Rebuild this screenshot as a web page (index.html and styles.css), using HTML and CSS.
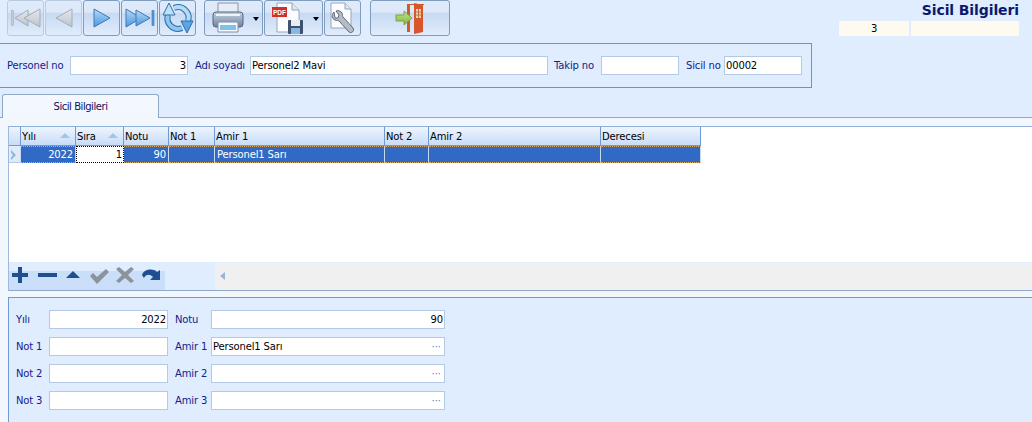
FILE: index.html
```html
<!DOCTYPE html>
<html lang="tr">
<head>
<meta charset="utf-8">
<title>Sicil Bilgileri</title>
<link rel="stylesheet" href="styles.css">
</head>
<body>
<svg class="defs" width="0" height="0">
  <defs>
    <linearGradient id="blueArrow" x1="0" y1="0" x2="0" y2="1"><stop offset="0" stop-color="#b6d9f7"/><stop offset="1" stop-color="#4a98e0"/></linearGradient>
    <linearGradient id="greyArrow" x1="0" y1="0" x2="0" y2="1"><stop offset="0" stop-color="#e4e8ec"/><stop offset="1" stop-color="#bcc4cc"/></linearGradient>
    <linearGradient id="printBody" x1="0" y1="0" x2="0" y2="1"><stop offset="0" stop-color="#c4d0e0"/><stop offset="1" stop-color="#6f84a0"/></linearGradient>
    <linearGradient id="greenArrow" x1="0" y1="0" x2="0" y2="1"><stop offset="0" stop-color="#c6e58a"/><stop offset="1" stop-color="#7db53c"/></linearGradient>
  </defs>
</svg>
<header class="top">
  <div class="toolbar">
    <div class="group">
      <button class="btn off" aria-label="İlk"><svg width="30" height="20" viewBox="0 0 30 20"><rect x="0.500" y="2.500" width="2" height="15" fill="#c4cbd2" stroke="#a9b1b9" stroke-width=".6"/><path d="M4 10 17 2v16z" fill="url(#greyArrow)" stroke="#a4acb4"/><path d="M13 10 29 1v18z" fill="url(#greyArrow)" stroke="#a4acb4"/></svg></button>
      <button class="btn off" aria-label="Önceki"><svg width="20" height="24" viewBox="0 0 20 24"><path d="M2 12 18 3v18z" fill="url(#greyArrow)" stroke="#a4acb4"/></svg></button>
      <button class="btn" aria-label="Sonraki"><svg width="20" height="24" viewBox="0 0 20 24"><path d="M18 12 2 3v18z" fill="url(#blueArrow)" stroke="#3c78b8"/></svg></button>
      <button class="btn" aria-label="Son"><svg width="30" height="20" viewBox="0 0 30 20"><path d="M16 10 1 1v18z" fill="url(#blueArrow)" stroke="#3c78b8"/><path d="M25 10 11 2v16z" fill="url(#blueArrow)" stroke="#3c78b8"/><rect x="27" y="2.500" width="2" height="15" fill="#4f9be0" stroke="#3c78b8" stroke-width=".6"/></svg></button>
      <button class="btn" aria-label="Yenile"><svg width="32" height="32" viewBox="0 0 32 32">
        <g fill="none">
          <path d="M20 26A10.500 10.500 0 0 1 6 13" stroke="#2f6ca8" stroke-width="6"/>
          <path d="M12 6A10.500 10.500 0 0 1 26 19" stroke="#2f6ca8" stroke-width="6"/>
          <path d="M20 26A10.500 10.500 0 0 1 6 13" stroke="#8ec7f0" stroke-width="4"/>
          <path d="M12 6A10.500 10.500 0 0 1 26 19" stroke="#b4dbf7" stroke-width="4"/>
        </g>
        <path d="M7 1 1 13h12z" fill="#bfe0f8" stroke="#2f6ca8"/>
        <path d="M25 31l6-12H19z" fill="#5aa5e6" stroke="#2f6ca8"/>
      </svg></button>
    </div>
    <div class="group">
      <button class="btn wide" aria-label="Yazdır"><svg width="32" height="32" viewBox="0 0 32 32"><path d="M6 1h20v11H6z" fill="#e8edf3" stroke="#8794a6"/><rect x="1" y="10" width="30" height="15" rx="3" fill="url(#printBody)" stroke="#4f6480"/><rect x="4" y="12" width="24" height="2" fill="#eef2f7"/><path d="M6 20h20v10H6z" fill="#f6f9fc" stroke="#7f8da0"/><rect x="8" y="23" width="16" height="5" fill="#7fc0ec"/></svg><i class="caret"></i></button>
      <button class="btn wide" aria-label="PDF"><svg width="34" height="32" viewBox="0 0 34 32"><path d="M5 1h15l7 7v22H5z" fill="#fafcff" stroke="#97a6b8"/><path d="M20 1v7h7" fill="#dfe7f0" stroke="#97a6b8"/><rect x="0" y="5" width="15" height="10" fill="#d0302a"/><text x="1" y="13" class="pdf">PDF</text><rect x="16" y="18" width="15" height="14" rx="1" fill="#3d5170"/><rect x="19" y="18" width="9" height="6" fill="#e8edf3"/><rect x="19" y="26" width="9" height="6" fill="#88b8e0"/></svg><i class="caret"></i></button>
      <button class="btn" aria-label="Ayarlar"><svg width="26" height="32" viewBox="0 0 26 32"><path d="M1 1h14l6 6v19H1z" fill="#fafcff" stroke="#97a6b8"/><path d="M15 1v6h6" fill="#dfe7f0" stroke="#97a6b8"/><path d="M4 10c-3 3-2 7 1 8 2 1 3 0 4 1l10 11c2 2 6-1 4-4L13 15c-1-1 0-2-1-4-1-2-4-3-6-2l3 4-1 3-3 0z" fill="#b4bcc6" stroke="#5f6b7a"/></svg></button>
    </div>
    <button class="btn exit" aria-label="Çıkış"><svg width="30" height="32" viewBox="0 0 30 32"><path d="M12 2h17v1H15v27h-3z" fill="#cf5a2c"/><path d="M19 1l9 2v27l-9 2z" fill="#d8562a"/><rect x="21" y="7" width="5" height="9" fill="#f0d6a6"/><path d="M21 10h5M21 13h5M23.500 7v9" stroke="#a9512b" fill="none" stroke-width=".7"/><path d="M1 13h8V9l8 7-8 7v-4H1z" fill="url(#greenArrow)" stroke="#7da24a"/></svg></button>
  </div>
  <div class="title-block">
    <h1 class="title">Sicil Bilgileri</h1>
    <div class="badges"><span class="badge num">3</span><span class="badge text"></span></div>
  </div>
</header>

<section class="person">
  <label class="lbl l-pno">Personel no</label><div class="input r w-pno">3</div>
  <label class="lbl l-ad">Adı soyadı</label><div class="input w-ad">Personel2 Mavi</div>
  <label class="lbl l-tk">Takip no</label><div class="input w-tk"></div>
  <label class="lbl l-sc">Sicil no</label><div class="input w-sc">00002</div>
</section>

<nav class="tabs"><div class="tab">Sicil Bilgileri</div></nav>

<main class="page">
  <div class="gridwrap">
    <div class="grid">
      <div class="row head">
        <div class="cell c0"></div>
        <div class="cell c1">Yılı<i class="sort"></i></div>
        <div class="cell c2">Sıra<i class="sort"></i></div>
        <div class="cell c3">Notu</div>
        <div class="cell c4">Not 1</div>
        <div class="cell c5">Amir 1</div>
        <div class="cell c6">Not 2</div>
        <div class="cell c7">Amir 2</div>
        <div class="cell c8">Derecesi</div>
      </div>
      <div class="row sel">
        <div class="cell c0"><svg width="8" height="10" viewBox="0 0 8 10"><path d="M1 0l5 5-5 5 0-2.500L3 5 1 2.500z" fill="#8fb3dd"/></svg></div>
        <div class="cell c1 r">2022</div>
        <div class="cell c2 r focus">1</div>
        <div class="cell c3 r">90</div>
        <div class="cell c4"></div>
        <div class="cell c5">Personel1 Sarı</div>
        <div class="cell c6"></div>
        <div class="cell c7"></div>
        <div class="cell c8"></div>
      </div>
    </div>
    <div class="gridbar">
      <div class="navicons">
        <svg width="154" height="22" viewBox="0 0 154 22">
          <path d="M7 1h4v6h6v4h-6v6H7v-6H1V7h6z" fill="#1f4f8e"/>
          <rect x="27" y="7" width="19" height="4" fill="#1f4f8e"/>
          <path d="M55 12 62 5l7 7z" fill="#1f4f8e"/>
          <path d="M79 10l3-3 4 4 9-8 3 3-12 12z" fill="#8c939b"/>
          <path d="M105 3l3-2 6 5 6-5 3 2-6 6 6 6-3 2-6-5-6 5-3-2 6-6z" fill="#8c939b"/>
          <path d="M131 9c2-6 11-7 15-3l3-2v10h-10l3-3c-3-3-7-3-9 1z" fill="#1f4f8e"/>
        </svg>
      </div>
      <div class="spacer"></div>
      <div class="scroll"><i class="left"></i></div>
    </div>
  </div>

  <section class="detail">
    <div class="drow"><label class="lbl d1">Yılı</label><div class="input r df">2022</div><label class="lbl d2">Notu</label><div class="input r dl">90</div></div>
    <div class="drow"><label class="lbl d1">Not 1</label><div class="input df"></div><label class="lbl d2">Amir 1</label><div class="input dl more">Personel1 Sarı</div></div>
    <div class="drow"><label class="lbl d1">Not 2</label><div class="input df"></div><label class="lbl d2">Amir 2</label><div class="input dl more"></div></div>
    <div class="drow"><label class="lbl d1">Not 3</label><div class="input df"></div><label class="lbl d2">Amir 3</label><div class="input dl more"></div></div>
  </section>
</main>
</body>
</html>
```
FILE: styles.css
```css
* { box-sizing: border-box; }
html, body { margin: 0; height: 100%; }
body {
  width: 1032px; height: 422px; overflow: hidden;
  background: #e0edfe;
  font: 10px/1 "DejaVu Sans", sans-serif;
  letter-spacing: -0.15px;
  color: #000;
  display: flex; flex-direction: column;
}
.defs { position: absolute; }
.top { height: 43px; display: flex; justify-content: space-between; padding: 0 13px 0 7px; flex: none; }
.toolbar { display: flex; align-items: flex-start; gap: 8px; }
.group { display: flex; gap: 1px; }
.btn {
  width: 37px; height: 36px; padding: 0; margin: 0;
  display: flex; align-items: center; justify-content: center;
  border: 1px solid #7e9cc0; border-radius: 3px;
  background: linear-gradient(#e0ebfa 0, #dce8f8 33%, #c7daf3 36%, #d4e3f7 70%, #e0ecfb 100%);
}
.btn.off { border-color: #b9cbe2; }
.btn.wide { width: 59px; justify-content: flex-start; padding-left: 7px; position: relative; }
.btn.exit { width: 80px; margin-left: 1px; }
.caret { position: absolute; right: 3px; top: 16px; border: 3.500px solid transparent; border-top: 4px solid #000; border-bottom: 0; }
.pdf { font: bold 6.500px "Liberation Sans", sans-serif; letter-spacing: 0; fill: #fff; }

.title-block { width: 180px; display: flex; flex-direction: column; align-items: flex-end; }
.title { margin: 3px 0 3px; font: bold 14px/15px "DejaVu Sans", sans-serif; letter-spacing: -0.1px; color: #0a1870; }
.badges { display: flex; gap: 2px; }
.badge { height: 15px; background: #fffaef; text-align: center; line-height: 16px; }
.badge.num { width: 70px; }
.badge.text { width: 108px; }

.person {
  width: 812px; height: 45px; flex: none;
  border: 1px solid #6f93c8; border-left: 0;
  display: flex; align-items: center;
  padding-left: 7px;
}
.lbl { color: #14208a; white-space: nowrap; }
.input {
  height: 19px; background: #fff; border: 1px solid #b4c9e4;
  padding: 0 1px; line-height: 17px; white-space: nowrap; overflow: hidden;
}
.r { text-align: right; }
.l-pno { width: 63px; }
.w-pno { width: 118px; }
.l-ad { width: 55px; margin-left: 7px; }
.w-ad { width: 298px; }
.l-tk { width: 47px; margin-left: 6px; }
.w-tk { width: 78px; }
.l-sc { width: 38px; margin-left: 7px; }
.w-sc { width: 78px; }

.tabs { height: 30px; flex: none; display: flex; align-items: flex-end; padding-left: 2px; position: relative; border-bottom: 1px solid #8fa8c8; }
.tab {
  width: 157px; height: 24px; margin-bottom: -1px;
  background: linear-gradient(#f4f8fe, #f2f7fe);
  border: 1px solid #8fa8c8; border-bottom: 0; border-radius: 3px 3px 0 0;
  text-align: center; line-height: 24px; color: #10105a;
  letter-spacing: -0.45px;
}

.page { flex: 1; background: #f2f7fe; padding-top: 8px; min-height: 0; }
.gridwrap { margin-left: 8px; border-left: 1px solid #9fb9dc; border-bottom: 1px solid #8ea9cc; border-top: 1px solid #8fb0dd; height: 165px; display: flex; flex-direction: column; }
.grid { flex: 1; background: #fff; }
.row { display: flex; }
.row.head { height: 19px; background: linear-gradient(#eef5fe, #c8dcf7); border-bottom: 1px solid #6f9ad8; width: 692px; }
.row.head .cell { border-right: 1px solid #6f9ad8; line-height: 19px; padding-left: 1px; position: relative; color: #000; }
.row.sel { height: 17px; width: 692px; background: #316ac5; color: #fff; }
.row.sel .cell { border-right: 1px solid #c8d8ef; border-top: 1px dotted #d8a860; border-bottom: 1px dotted #d8a860; line-height: 15px; padding: 0 2px; }
.row.sel .c0 { background: #dfebfb; border-top: 0; border-bottom: 1px solid #b4c9e4; padding: 3px 1px; }
.row.sel .focus { background: #fff; color: #000; border: 1px dotted #000; padding-right: 1px; }
.cell { flex: none; overflow: hidden; white-space: nowrap; }
.c0 { width: 12px; }
.c1 { width: 55px; }
.c2 { width: 48px; }
.c3 { width: 45px; }
.c4 { width: 46px; }
.c5 { width: 170px; }
.c6 { width: 44px; }
.c7 { width: 172px; }
.c8 { width: 100px; }
.sort { position: absolute; right: 5px; top: 6px; border: 5px solid transparent; border-bottom: 5px solid #a4c4ea; border-top: 0; }

.gridbar { height: 28px; flex: none; display: flex; background: #e0edfe; }
.navicons { width: 156px; background: linear-gradient(#e0edfe 0, #e0edfe 32%, #c9def9 33%, #cbdff9 100%); padding: 4px 0 0 2px; }
.spacer { width: 50px; }
.scroll { flex: 1; background: #f0f0f0; position: relative; margin-top: 1px; }
.left { position: absolute; left: 5px; top: 9px; border: 4px solid transparent; border-right: 5px solid #9bb4d6; border-left: 0; }

.detail { margin: 6px 0 0 8px; border: 1px solid #6f9ad8; border-right: 0; border-bottom: 0; background: #e0edfe; height: 125px; padding-top: 12px; display: flex; flex-direction: column; gap: 8px; }
.drow { display: flex; align-items: center; height: 19px; }
.d1 { width: 33px; margin-left: 7px; }
.df { width: 119px; }
.d2 { width: 36px; margin-left: 7px; }
.dl { width: 234px; position: relative; }
.more::after { content: "···"; position: absolute; right: 3px; top: 0; color: #4d7fc0; letter-spacing: 0; }
```
